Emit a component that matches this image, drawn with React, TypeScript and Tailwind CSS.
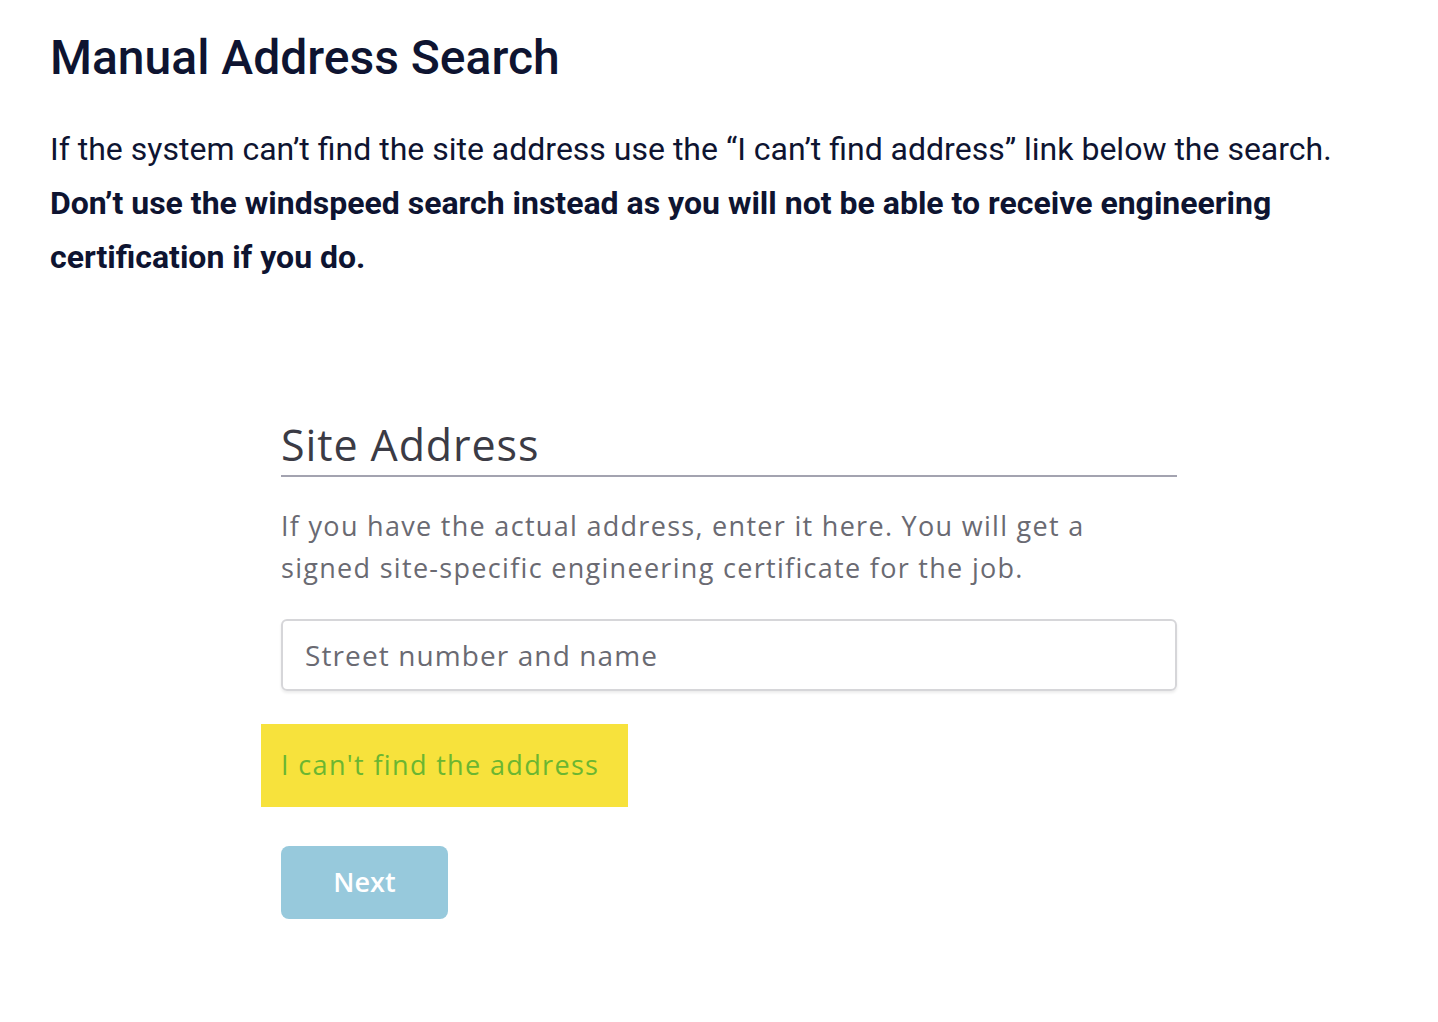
const App = () => {
  return (
    <main className="min-h-screen w-full bg-white text-[#0e1431]">
      <section className="pl-[50px] pr-[40px] pt-[28px]">
        <h1 className="font-['Roboto',sans-serif] text-[48px] font-medium leading-[60px]">
          Manual Address Search
        </h1>
        <div className="mt-[34px] font-['Roboto',sans-serif] text-[32px] leading-[54px]">
          <p>
            If the system can’t find the site address use the “I can’t find address” link below the search.
          </p>
          <p className="max-w-[1300px] font-bold">
            Don’t use the windspeed search instead as you will not be able to receive engineering certification if you do.
          </p>
        </div>
      </section>

      {/* Embedded screenshot of the site address form */}
      <section className="mt-[135px] pl-[281px] font-['Open_Sans',sans-serif]">
        <div className="w-[896px]">
          <h2 className="border-b-2 border-[#a3a3b0] pb-[4px] text-[43px] leading-[52px] tracking-[0.9px] text-[#3b3b45]">
            Site Address
          </h2>
          <p className="mt-[28px] max-w-[840px] text-[27px] leading-[42px] tracking-[1.3px] text-[#6a6a72]">
            If you have the actual address, enter it here. You will get a signed site-specific engineering certificate for the job.
          </p>
          <input
            type="text"
            placeholder="Street number and name"
            className="mt-[30px] h-[72px] w-full rounded-[6px] border-2 border-[#d6d6d9] px-[22px] text-[28px] tracking-[1.1px] shadow-[0_2px_3px_rgba(0,0,0,0.08)] placeholder:text-[#6a6a72] outline-none"
          />
        </div>
        <div className="mt-[33px] -ml-[20px] flex h-[83px] w-[367px] items-center bg-[#f7e23c] pl-[20px]">
          <span className="text-[27px] tracking-[1.35px] text-[#6bb631]">I can't find the address</span>
        </div>
        <button className="mt-[39px] h-[73px] w-[167px] rounded-[8px] bg-[#97c9dc] text-[27px] font-semibold text-white">
          Next
        </button>
      </section>
    </main>
  );
};

export default App;
